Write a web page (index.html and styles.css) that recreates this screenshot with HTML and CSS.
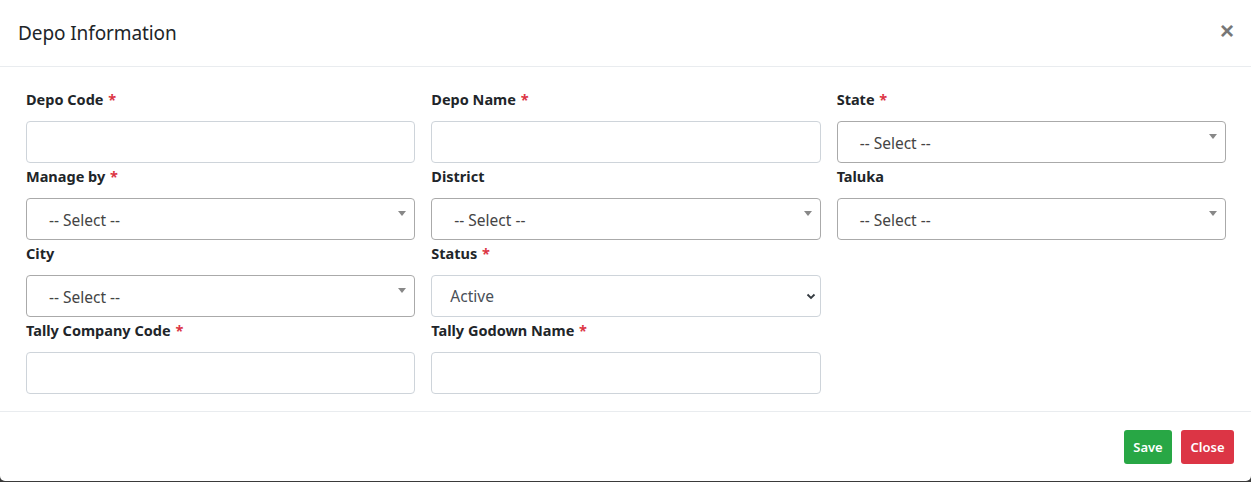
FILE: index.html
```html
<!DOCTYPE html>
<html lang="en">
<head>
<meta charset="utf-8">
<title>Depo Information</title>
<link rel="stylesheet" href="styles.css">
</head>
<body>
<div class="modal">
  <div class="modal-header">
    <h5 class="modal-title">Depo Information</h5>
    <button class="close" type="button" aria-label="Close">&times;</button>
  </div>
  <div class="modal-body">
    <div class="form-grid">
      <div class="field">
        <label>Depo Code <span class="req">*</span></label>
        <input class="input" type="text">
      </div>
      <div class="field">
        <label>Depo Name <span class="req">*</span></label>
        <input class="input" type="text">
      </div>
      <div class="field">
        <label>State <span class="req">*</span></label>
        <div class="s2"><span class="s2-text">-- Select --</span><span class="s2-arrow"></span></div>
      </div>
      <div class="field">
        <label>Manage by <span class="req">*</span></label>
        <div class="s2"><span class="s2-text">-- Select --</span><span class="s2-arrow"></span></div>
      </div>
      <div class="field">
        <label>District</label>
        <div class="s2"><span class="s2-text">-- Select --</span><span class="s2-arrow"></span></div>
      </div>
      <div class="field">
        <label>Taluka</label>
        <div class="s2"><span class="s2-text">-- Select --</span><span class="s2-arrow"></span></div>
      </div>
      <div class="field">
        <label>City</label>
        <div class="s2"><span class="s2-text">-- Select --</span><span class="s2-arrow"></span></div>
      </div>
      <div class="field">
        <label>Status <span class="req">*</span></label>
        <div class="native-select"><span class="ns-text">Active</span>
          <svg class="chev" width="10" height="7" viewBox="0 0 10 7"><path d="M1.5 1.5 L5 5 L8.5 1.5" fill="none" stroke="#343a40" stroke-width="1.8"/></svg>
        </div>
      </div>
      <div class="field empty"></div>
      <div class="field">
        <label>Tally Company Code <span class="req">*</span></label>
        <input class="input" type="text">
      </div>
      <div class="field">
        <label>Tally Godown Name <span class="req">*</span></label>
        <input class="input" type="text">
      </div>
    </div>
  </div>
  <div class="modal-footer">
    <button class="btn btn-save" type="button">Save</button>
    <button class="btn btn-close" type="button">Close</button>
  </div>
</div>
</body>
</html>
```
FILE: styles.css
```css
html, body {
  margin: 0;
  padding: 0;
  background: #3a3a3a;
  font-family: "Noto Sans", "Open Sans", "Liberation Sans", sans-serif;
  color: #212529;
}
.modal {
  width: 1251px;
  height: 481px;
  background: #fff;
  border-radius: 0 0 5px 5px;
  box-sizing: border-box;
  display: flex;
  flex-direction: column;
}
.modal-header {
  height: 67px;
  box-sizing: border-box;
  border-bottom: 1px solid #e9ecef;
  display: flex;
  align-items: center;
  justify-content: space-between;
  padding: 0 17px 0 18px;
}
.modal-title {
  margin: 0;
  font-size: 19px;
  font-weight: 400;
  color: #212529;
  letter-spacing: -0.1px;
}
.close {
  border: 0;
  background: none;
  padding: 0;
  font-size: 24px;
  line-height: 1;
  font-weight: 700;
  color: #777;
  font-family: "Liberation Sans", sans-serif;
  margin-top: -4px;
}
.modal-body {
  padding: 19px 25px 17px 26px;
  border-bottom: 1px solid #e9ecef;
}
.form-grid {
  display: grid;
  grid-template-columns: repeat(3, 1fr);
  column-gap: 16px;
}
.field {
  display: flex;
  flex-direction: column;
  padding-top: 2px;
}
.field label {
  font-size: 14.5px;
  font-weight: 700;
  line-height: 22px;
  margin-bottom: 11px;
  color: #212529;
}
.req {
  color: #dc3545;
  margin-left: 1px;
}
.input {
  height: 42px;
  box-sizing: border-box;
  border: 1px solid #ced4da;
  border-radius: 4px;
  width: 100%;
  margin: 0;
  font-family: inherit;
}
.s2 {
  height: 42px;
  box-sizing: border-box;
  border: 1px solid #aaa;
  border-radius: 4px;
  position: relative;
  display: flex;
  align-items: center;
  padding-left: 22px;
}
.s2-text {
  font-size: 15.5px;
  color: #444;
  margin-top: 1px;
}
.s2-arrow {
  position: absolute;
  right: 8px;
  top: 12px;
  width: 0;
  height: 0;
  border-left: 4px solid transparent;
  border-right: 4px solid transparent;
  border-top: 5px solid #888;
}
.native-select {
  height: 42px;
  box-sizing: border-box;
  border: 1px solid #ced4da;
  border-radius: 4px;
  display: flex;
  align-items: center;
  justify-content: space-between;
  padding: 0 4px 0 18px;
}
.ns-text {
  font-size: 15.5px;
  color: #495057;
}
.chev {
  display: block;
}
.modal-footer {
  flex: 1;
  display: flex;
  justify-content: flex-end;
  align-items: flex-start;
  gap: 9px;
  padding: 18px 17px 0 0;
}
.btn {
  height: 34px;
  border: 0;
  border-radius: 3px;
  color: #fff;
  font-family: inherit;
  font-size: 13px;
  font-weight: 600;
  padding: 0 6px;
}
.btn-save {
  background: #28a745;
  width: 48px;
}
.btn-close {
  background: #dc3545;
  width: 53px;
}
```
